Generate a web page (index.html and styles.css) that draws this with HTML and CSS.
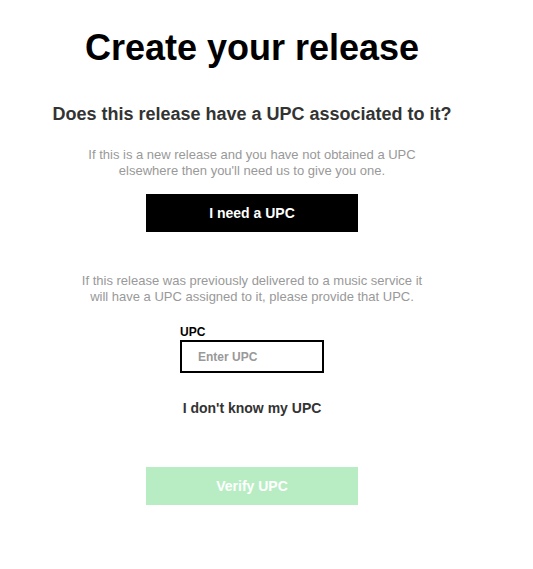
FILE: index.html
```html
<!DOCTYPE html>
<html lang="en">
<head>
<meta charset="utf-8">
<title>Create your release</title>
<link rel="stylesheet" href="styles.css">
</head>
<body>
<main class="page">
  <h1 class="title">Create your release</h1>
  <h2 class="question">Does this release have a UPC associated to it?</h2>
  <p class="hint hint-first">If this is a new release and you have not obtained a UPC elsewhere then you'll need us to give you one.</p>
  <button class="btn btn-dark" type="button">I need a UPC</button>
  <p class="hint hint-second">If this release was previously delivered to a music service it will have a UPC assigned to it, please provide that UPC.</p>
  <div class="field">
    <label class="field-label" for="upc">UPC</label>
    <input class="field-input" id="upc" type="text" placeholder="Enter UPC">
  </div>
  <a class="link" href="#">I don't know my UPC</a>
  <button class="btn btn-verify" type="button" disabled>Verify UPC</button>
</main>
</body>
</html>
```

FILE: styles.css
```css
* {
  box-sizing: border-box;
}

html, body {
  margin: 0;
  padding: 0;
  background: #fff;
}

body {
  font-family: "Liberation Sans", Arial, Helvetica, sans-serif;
}

.page {
  width: 504px;
  display: flex;
  flex-direction: column;
  align-items: center;
  padding-top: 27px;
}

.title {
  margin: 0;
  font-size: 36px;
  line-height: 41px;
  font-weight: 700;
  color: #000;
}

.question {
  margin: 36px 0 0;
  font-size: 18px;
  line-height: 21px;
  font-weight: 700;
  color: #333;
}

.hint {
  margin: 0;
  width: 352px;
  font-size: 13px;
  line-height: 16px;
  color: #999;
  text-align: center;
}

.hint-first {
  margin-top: 22px;
}

.hint-second {
  margin-top: 41px;
}

.btn {
  width: 212px;
  height: 38px;
  border: 0;
  padding: 0;
  font-family: inherit;
  font-size: 14px;
  font-weight: 700;
  color: #fff;
}

.btn-dark {
  margin-top: 15px;
  background: #000;
}

.btn-verify {
  margin-top: 51px;
  background: #b8edc4;
}

.field {
  margin-top: 20px;
  width: 144px;
  display: flex;
  flex-direction: column;
  gap: 1px;
}

.field-label {
  font-size: 12px;
  line-height: 14px;
  font-weight: 700;
  color: #000;
}

.field-input {
  width: 144px;
  height: 33px;
  border: 2px solid #000;
  padding: 0 0 0 16px;
  margin: 0;
  font-family: inherit;
  font-size: 12px;
  font-weight: 700;
  color: #000;
  outline: none;
}

.field-input::placeholder {
  color: #999;
  opacity: 1;
}

.link {
  margin-top: 27px;
  font-size: 14px;
  line-height: 16px;
  font-weight: 700;
  color: #333;
  text-decoration: none;
}
```
